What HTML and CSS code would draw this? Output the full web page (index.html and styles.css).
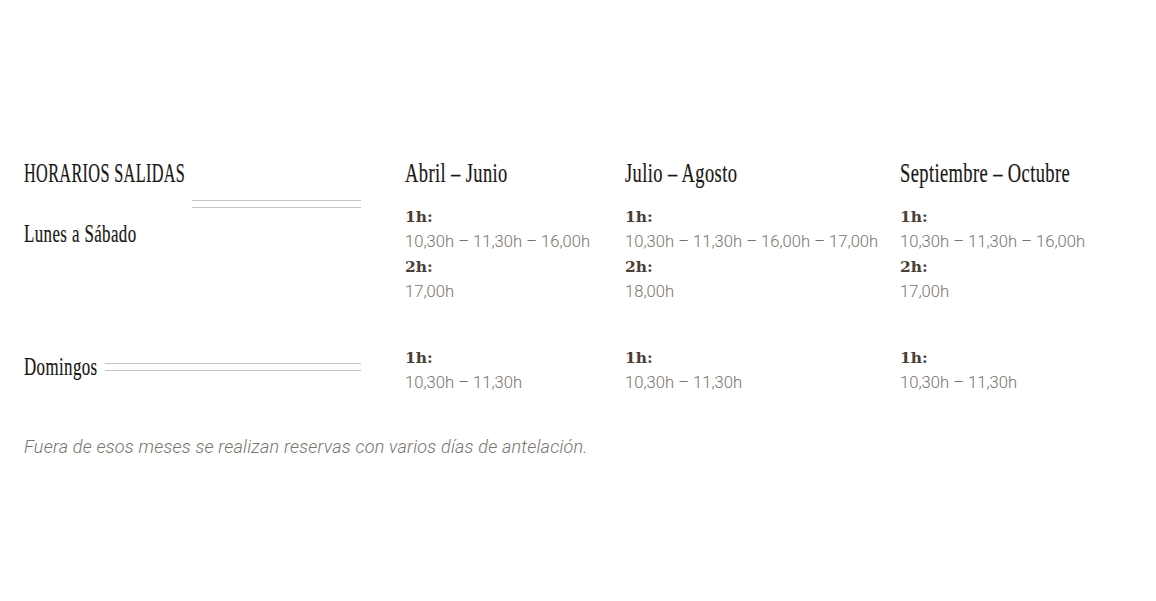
FILE: index.html
```html
<!DOCTYPE html>
<html lang="es">
<head>
<meta charset="utf-8">
<title>Horarios salidas</title>
<link rel="stylesheet" href="styles.css">
</head>
<body>
<main class="page">
  <section class="schedule">
    <div class="cell head-left"><h2 class="cond title caps">HORARIOS SALIDAS</h2></div>
    <div class="cell"><h3 class="cond title">Abril – Junio</h3></div>
    <div class="cell"><h3 class="cond title">Julio – Agosto</h3></div>
    <div class="cell"><h3 class="cond title">Septiembre – Octubre</h3></div>

    <div class="cell day-left">
      <div class="double-line short"></div>
      <span class="cond day">Lunes a Sábado</span>
    </div>
    <div class="cell times">
      <b>1h:</b><span>10,30h – 11,30h – 16,00h</span>
      <b>2h:</b><span>17,00h</span>
    </div>
    <div class="cell times">
      <b>1h:</b><span>10,30h – 11,30h – 16,00h – 17,00h</span>
      <b>2h:</b><span>18,00h</span>
    </div>
    <div class="cell times">
      <b>1h:</b><span>10,30h – 11,30h – 16,00h</span>
      <b>2h:</b><span>17,00h</span>
    </div>

    <div class="cell sunday-left">
      <span class="sun-label"><span class="cond day">Domingos</span></span>
      <div class="double-line grow"></div>
    </div>
    <div class="cell times sunday">
      <b>1h:</b><span>10,30h – 11,30h</span>
    </div>
    <div class="cell times sunday">
      <b>1h:</b><span>10,30h – 11,30h</span>
    </div>
    <div class="cell times sunday">
      <b>1h:</b><span>10,30h – 11,30h</span>
    </div>
  </section>
  <p class="note">Fuera de esos meses se realizan reservas con varios días de antelación.</p>
</main>
</body>
</html>
```
FILE: styles.css
```css
html, body {
  margin: 0;
  padding: 0;
  background: #fff;
}
.page {
  padding: 160px 24px 0 24px;
  font-family: "Roboto", "Liberation Sans", sans-serif;
}
.schedule {
  display: grid;
  grid-template-columns: 381px 220px 275px 1fr;
  row-gap: 0;
}
.cell {
  min-width: 0;
}
.cond {
  display: inline-block;
  font-family: "Liberation Serif", serif;
  font-weight: 400;
  color: #1a1614;
  -webkit-text-stroke: 0.2px #1a1614;
  letter-spacing: 0.6px;
  transform: scaleX(0.66);
  transform-origin: left center;
  white-space: nowrap;
}
.title {
  margin: 0;
  font-size: 28px;
  line-height: 26px;
}
.caps {
  transform: scaleX(0.58);
}
.head-left, .day-left, .sunday-left {
  padding-right: 44px;
}
.day-left {
  display: flex;
  flex-direction: column;
  padding-top: 14px;
}
.double-line {
  height: 6px;
  border-top: 1px solid #c4c4c4;
  border-bottom: 1px solid #c4c4c4;
}
.short {
  width: 169px;
  align-self: flex-end;
}
.day {
  font-size: 25.8px;
  line-height: 30px;
  margin-top: 11px;
  transform: scaleX(0.655);
}
.times {
  display: flex;
  flex-direction: column;
  align-items: flex-start;
  padding-top: 18px;
  font-size: 16.6px;
  line-height: 25px;
  color: #7a726d;
  font-weight: 300;
  white-space: nowrap;
}
.times b {
  font-family: "DejaVu Serif", serif;
  font-weight: 700;
  font-size: 15.5px;
  color: #4a3f37;
}
.sunday-left {
  display: flex;
  align-items: center;
  gap: 9px;
  padding-top: 38px;
  height: 50px;
}
.sun-label {
  flex: none;
  width: 72px;
}
.sunday-left .day {
  margin-top: 0;
}
.grow {
  flex: 1;
}
.sunday {
  padding-top: 41px;
}
.note {
  margin: 40px 0 0 0;
  font-family: "Roboto", sans-serif;
  font-weight: 300;
  font-style: italic;
  font-size: 18px;
  letter-spacing: 0.22px;
  line-height: 24px;
  color: #7a726d;
}
```
